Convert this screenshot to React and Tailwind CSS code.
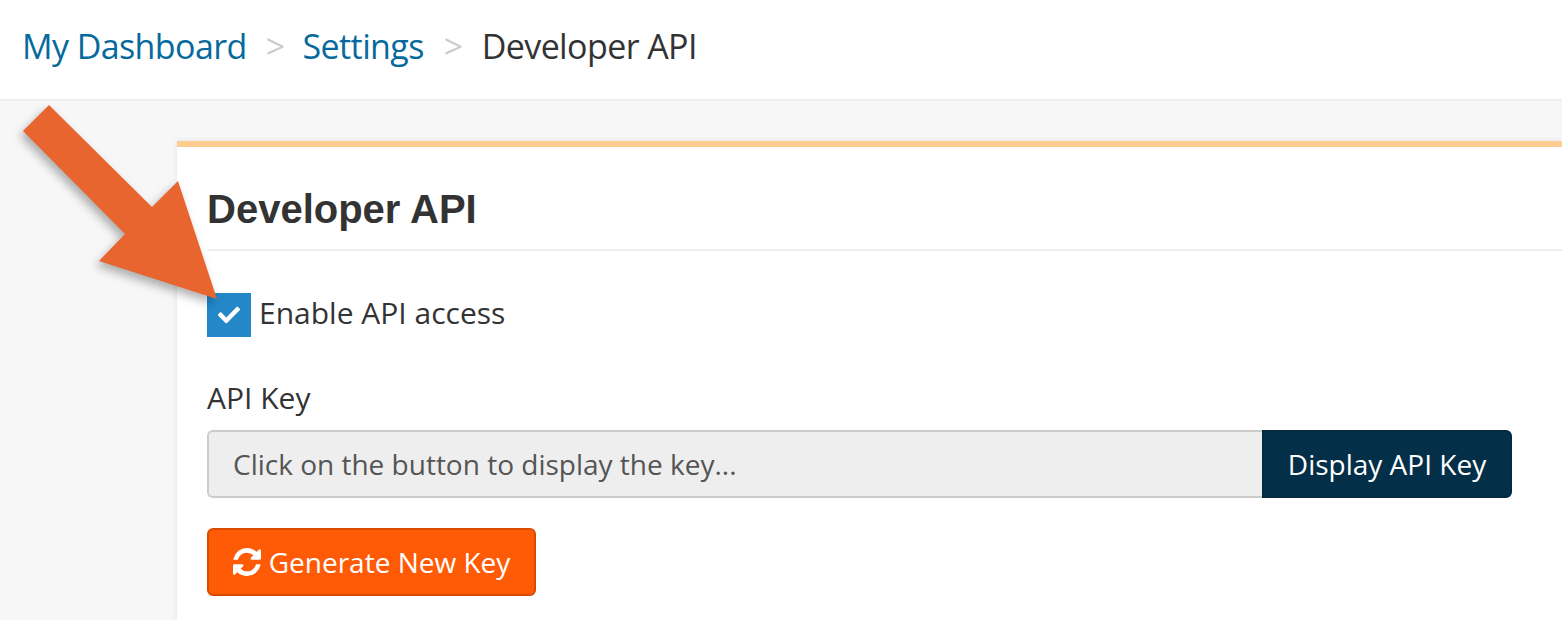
import React from 'react';
import { FaCheck } from 'react-icons/fa';

function Arrow() {
  return (
    <svg className="absolute left-0 top-0 drop-shadow-[-3px_5px_5px_rgba(0,0,0,0.3)]" width="260" height="320" viewBox="0 0 260 320">
      <polygon points="49,105 23,131 125,234 99,261 217,299 178,181 152,207" fill="#e8652f" />
    </svg>
  );
}

function RefreshIcon() {
  return (
    <svg className="h-7 w-7" viewBox="0 0 1536 1536" fill="currentColor">
      <path d="M1511 928q0 5-1 7-64 268-268 434.5t-478 166.5q-146 0-282.5-55t-243.5-157l-129 129q-19 19-45 19t-45-19-19-45v-448q0-26 19-45t45-19h448q26 0 45 19t19 45-19 45l-137 137q71 66 161 102t187 36q134 0 250-65t186-179q11-17 53-117 8-23 30-23h192q13 0 22.5 9.5t9.5 22.5zm25-800v448q0 26-19 45t-45 19h-448q-26 0-45-19t-19-45 19-45l138-138q-148-137-349-137-134 0-250 65t-186 179q-11 17-53 117-8 23-30 23h-199q-13 0-22.5-9.5t-9.5-22.5v-7q65-268 270-434.5t480-166.5q146 0 284 55.5t245 156.5l130-129q19-19 45-19t45 19 19 45z" />
    </svg>
  );
}

export default function App() {
  return (
    <div className="relative h-[620px] overflow-hidden bg-[#f7f7f7] font-['Open_Sans',sans-serif] text-[#333]">
      {/* Breadcrumb */}
      <div className="flex h-[101px] items-center border-b-2 border-[#eeeeee] bg-white pb-[7px] pl-[22px] text-[34px] tracking-[-0.6px]">
        <a className="text-[#076a9c]">My Dashboard</a>
        <span className="ml-[19px] mr-[18px] text-[#cccccc]">&gt;</span>
        <a className="text-[#076a9c]">Settings</a>
        <span className="ml-[20px] mr-[19px] text-[#cccccc]">&gt;</span>
        <span>Developer API</span>
      </div>

      {/* Card */}
      <div className="ml-[177px] mt-10 h-[480px] border-t-[6px] border-[#fdcd92] bg-white pl-[30px] shadow-[0_0_6px_rgba(0,0,0,0.08)]">
        <h1 className="flex h-[104px] items-center border-b-2 border-[#eeeeee] pt-[22px] font-['Liberation_Sans',sans-serif] text-[40px] font-bold">
          Developer API
        </h1>
        <label className="mt-[42px] flex h-11 items-center text-[30px]">
          <span className="mr-2 flex h-11 w-11 items-center justify-center bg-[#2488c8] text-white">
            <FaCheck className="h-[22px] w-[22px]" />
          </span>
          <span className="pb-[6px]">Enable API access</span>
        </label>
        <div className="mt-[41px] text-[30px] leading-[40px]">API Key</div>
        <div className="mt-[12px] flex h-[68px] w-[1305px]">
          <div className="flex flex-1 items-center rounded-l-md border-2 border-r-0 border-[#cccccc] bg-[#eeeeee] pl-[24px] text-[28px] text-[#555555]">
            Click on the button to display the key...
          </div>
          <button className="w-[250px] rounded-r-md border-2 border-[#022a40] bg-[#032f48] text-[28px] text-white">
            Display API Key
          </button>
        </div>
        <button className="mt-[30px] flex h-[68px] w-[329px] items-center justify-center gap-2 rounded-md border-2 border-[#d94c00] bg-[#ff5b07] text-[28px] text-white">
          <RefreshIcon />
          Generate New Key
        </button>
      </div>

      <Arrow />
    </div>
  );
}
